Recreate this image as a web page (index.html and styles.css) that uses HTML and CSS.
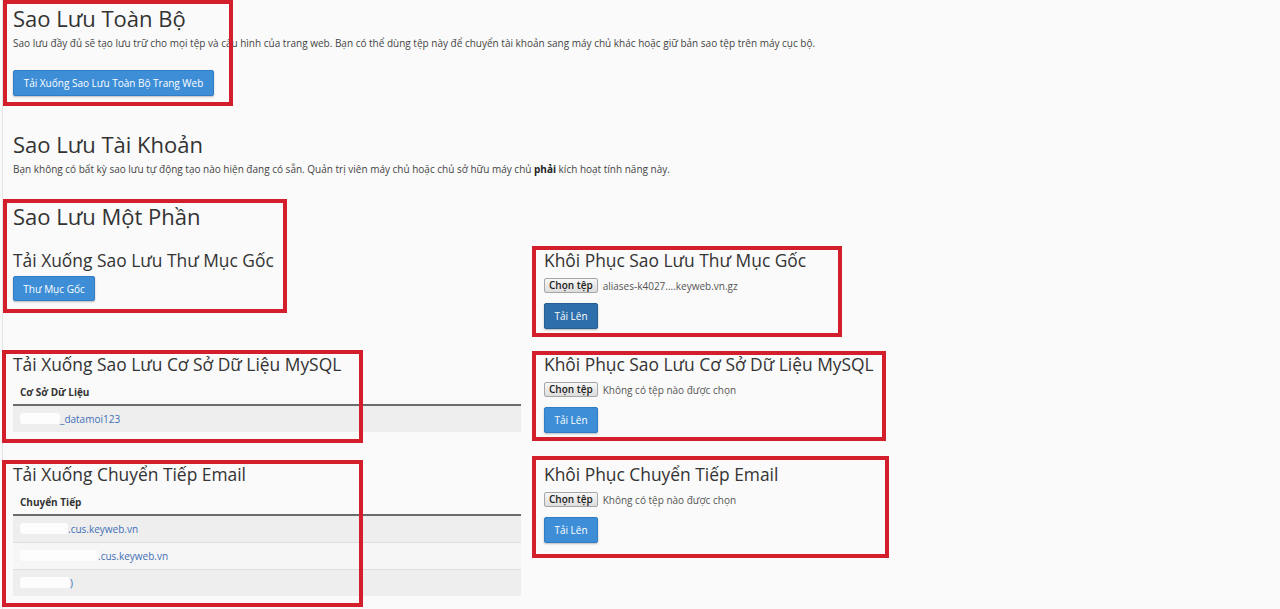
FILE: index.html
```html
<!DOCTYPE html>
<html lang="vi">
<head>
  <meta charset="UTF-8">
  <title>Sao Lưu</title>
  <link rel="stylesheet" href="styles.css">
</head>
<body>
  <div class="page">
    <section class="full">
      <h1>Sao Lưu Toàn Bộ</h1>
      <p class="desc">Sao lưu đầy đủ sẽ tạo lưu trữ cho mọi tệp và cấu hình của trang web. Bạn có thể dùng tệp này để chuyển tài khoản sang máy chủ khác hoặc giữ bản sao tệp trên máy cục bộ.</p>
      <button class="btn btn-wide">Tải Xuống Sao Lưu Toàn Bộ Trang Web</button>
    </section>

    <section class="account">
      <h1>Sao Lưu Tài Khoản</h1>
      <p class="desc">Bạn không có bất kỳ sao lưu tự động tạo nào hiện đang có sẵn. Quản trị viên máy chủ hoặc chủ sở hữu máy chủ <strong>phải</strong> kích hoạt tính năng này.</p>
    </section>

    <section class="partial">
      <h1>Sao Lưu Một Phần</h1>

      <div class="row row-home">
        <div class="col">
          <h3>Tải Xuống Sao Lưu Thư Mục Gốc</h3>
          <button class="btn btn-home">Thư Mục Gốc</button>
        </div>
        <div class="col">
          <h3>Khôi Phục Sao Lưu Thư Mục Gốc</h3>
          <div class="file-row">
            <span class="file-btn">Chọn tệp</span>
            <span class="file-name">aliases-k4027....keyweb.vn.gz</span>
          </div>
          <button class="btn btn-upload active">Tải Lên</button>
        </div>
      </div>

      <div class="row row-db">
        <div class="col">
          <h3>Tải Xuống Sao Lưu Cơ Sở Dữ Liệu MySQL</h3>
          <table class="list">
            <thead>
              <tr><th>Cơ Sở Dữ Liệu</th></tr>
            </thead>
            <tbody>
              <tr><td><span class="redact w40"></span><a href="#">_datamoi123</a></td></tr>
            </tbody>
          </table>
        </div>
        <div class="col">
          <h3>Khôi Phục Sao Lưu Cơ Sở Dữ Liệu MySQL</h3>
          <div class="file-row">
            <span class="file-btn">Chọn tệp</span>
            <span class="file-name">Không có tệp nào được chọn</span>
          </div>
          <button class="btn btn-upload">Tải Lên</button>
        </div>
      </div>

      <div class="row row-mail">
        <div class="col">
          <h3>Tải Xuống Chuyển Tiếp Email</h3>
          <table class="list">
            <thead>
              <tr><th>Chuyển Tiếp</th></tr>
            </thead>
            <tbody>
              <tr><td><span class="redact w48"></span><a href="#">.cus.keyweb.vn</a></td></tr>
              <tr><td><span class="redact w78"></span><a href="#">.cus.keyweb.vn</a></td></tr>
              <tr><td><span class="redact w50"></span><a href="#">)</a></td></tr>
            </tbody>
          </table>
        </div>
        <div class="col">
          <h3>Khôi Phục Chuyển Tiếp Email</h3>
          <div class="file-row">
            <span class="file-btn">Chọn tệp</span>
            <span class="file-name">Không có tệp nào được chọn</span>
          </div>
          <button class="btn btn-upload">Tải Lên</button>
        </div>
      </div>
    </section>
  </div>

  <!-- red annotation frames drawn over the screenshot -->
  <div class="mark mark-full"></div>
  <div class="mark mark-partial"></div>
  <div class="mark mark-home-restore"></div>
  <div class="mark mark-db"></div>
  <div class="mark mark-db-restore"></div>
  <div class="mark mark-mail"></div>
  <div class="mark mark-mail-restore"></div>
</body>
</html>
```

FILE: styles.css
```css
* {
  box-sizing: border-box;
}
body {
  margin: 0;
  position: relative;
  background: #fafafa;
  font-family: "Open Sans", "Liberation Sans", sans-serif;
  color: #333;
}
.page {
  margin-left: 2px;
  border-left: 1px solid #e4e4e4;
  padding: 4px 0 0 10px;
  min-height: 609px;
}
h1 {
  font-size: 22px;
  line-height: 28px;
  font-weight: 400;
  margin: 0;
}
h3 {
  font-size: 17.4px;
  line-height: 22px;
  font-weight: 400;
  margin: 0;
}
.desc {
  font-size: 10px;
  line-height: 14px;
  margin: 4px 0 0;
  color: #444;
}
.desc strong {
  color: #222;
}

/* buttons */
.btn {
  display: block;
  height: 26px;
  padding: 0 10px;
  font-family: inherit;
  font-size: 10px;
  white-space: nowrap;
  color: #fff;
  background: #3d8ed7;
  border: 1px solid #2f7ec5;
  border-radius: 2px;
  box-shadow: 0 1px 2px rgba(0, 0, 0, 0.25);
}
.btn-wide {
  margin-top: 20px;
  width: 201px;
  padding: 0;
}
.btn-home {
  margin-top: 5px;
  height: 25px;
  width: 82px;
  padding: 0;
}
.btn-upload {
  margin-top: 10px;
  width: 54px;
  padding: 0;
}
.btn-upload.active {
  background: #2e6eab;
  border-color: #245e95;
}

/* sections */
.account {
  margin-top: 34px;
}
.partial {
  margin-top: 26px;
}
.row {
  display: grid;
  grid-template-columns: 508px 1fr;
  column-gap: 23px;
}
.row-home {
  margin-top: 19px;
}
.row-db {
  margin-top: 24px;
}
.row-mail {
  margin-top: 30px;
}

/* file picker */
.file-row {
  display: flex;
  align-items: center;
  gap: 5px;
  margin-top: 7px;
  height: 15px;
}
.file-btn {
  height: 15px;
  padding: 0 4px;
  font-size: 10px;
  line-height: 13px;
  font-weight: 600;
  color: #222;
  background: linear-gradient(#f7f7f7, #dddddd);
  border: 1px solid #a6a6a6;
  border-radius: 2px;
}
.file-name {
  font-size: 10px;
  color: #555;
}

/* tables */
.list {
  width: 100%;
  border-collapse: separate;
  border-spacing: 0;
  font-size: 10px;
  line-height: 14px;
}
.list th {
  text-align: left;
  font-weight: 700;
  padding: 10px 7px 5px;
  border-bottom: 2px solid #6b6b6b;
  color: #333;
}
.list td {
  padding: 6px 7px;
  background: #eeeeee;
}
.list tbody tr:nth-child(even) td {
  background: #f6f6f6;
}
.list tbody tr + tr td {
  border-top: 1px solid #dedede;
}
.list a {
  color: #3f6fb5;
  text-decoration: none;
}
.redact {
  display: inline-block;
  height: 11px;
  vertical-align: -1px;
  background: #fdfdfd;
  border-radius: 3px;
}
.w40 { width: 40px; }
.w48 { width: 48px; }
.w50 { width: 50px; }
.w78 { width: 78px; }

/* annotation frames */
.mark {
  position: absolute;
  border: 4px solid #d31f2b;
}
.mark-full { left: 3px; top: 0; width: 230px; height: 106px; }
.mark-partial { left: 3px; top: 199px; width: 284px; height: 114px; }
.mark-home-restore { left: 532px; top: 246px; width: 310px; height: 91px; }
.mark-db { left: 2px; top: 350px; width: 361px; height: 93px; }
.mark-db-restore { left: 532px; top: 351px; width: 354px; height: 90px; }
.mark-mail { left: 2px; top: 460px; width: 361px; height: 147px; }
.mark-mail-restore { left: 532px; top: 456px; width: 357px; height: 102px; }
```
